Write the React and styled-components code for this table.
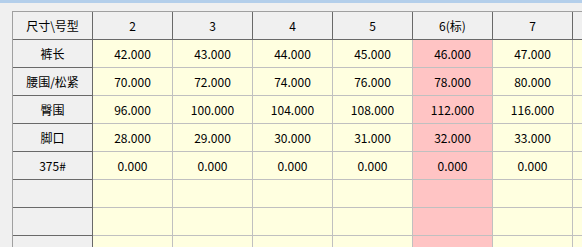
import React from "react";
import styled, { createGlobalStyle } from "styled-components";

const GlobalStyle = createGlobalStyle`
  html, body {
    margin: 0;
    padding: 0;
    background: #f0f0f0;
    overflow: hidden;
  }
  body {
    font-family: "Noto Sans CJK SC", "Noto Sans", sans-serif;
    font-size: 12px;
    color: #000;
  }
`;

const Window = styled.div`
  width: 582px;
  height: 247px;
  overflow: hidden;
  background: #f0f0f0;
  border-top: 3px solid #b4cfeb;
  box-sizing: border-box;
`;

const GridArea = styled.div`
  padding: 8px 0 0 12px;
`;

const Table = styled.table`
  border-collapse: separate;
  border-spacing: 0;
  border-top: 1px solid #a0a0a0;
  border-left: 1px solid #a0a0a0;
  table-layout: fixed;
`;

const HeadCell = styled.th`
  width: 79px;
  min-width: 79px;
  height: 27px;
  padding: 0;
  background: #f0f0f0;
  border-right: 1px solid #696969;
  border-bottom: 1px solid #696969;
  font-weight: normal;
  text-align: center;
  vertical-align: middle;
  line-height: 27px;
  white-space: nowrap;
`;

const Cell = styled.td`
  width: 79px;
  min-width: 79px;
  height: 27px;
  padding: 0;
  background: ${(p) => (p.$standard ? "#ffc4c4" : "#ffffe0")};
  border-right: 1px solid #c0c0c0;
  border-bottom: 1px solid #c0c0c0;
  text-align: center;
  vertical-align: middle;
  line-height: 27px;
  white-space: nowrap;
`;

const sizes = ["2", "3", "4", "5", "6(标)", "7", ""];
const standardIndex = 4;

const rows = [
  { name: "裤长", values: ["42.000", "43.000", "44.000", "45.000", "46.000", "47.000", ""] },
  { name: "腰围/松紧", values: ["70.000", "72.000", "74.000", "76.000", "78.000", "80.000", ""] },
  { name: "臀围", values: ["96.000", "100.000", "104.000", "108.000", "112.000", "116.000", ""] },
  { name: "脚口", values: ["28.000", "29.000", "30.000", "31.000", "32.000", "33.000", ""] },
  { name: "375#", values: ["0.000", "0.000", "0.000", "0.000", "0.000", "0.000", ""] },
  { name: "", values: Array(7).fill("") },
  { name: "", values: Array(7).fill("") },
  { name: "", values: Array(7).fill("") },
];

export default function App() {
  return (
    <>
      <GlobalStyle />
      <Window>
        <GridArea>
          <Table>
            <thead>
              <tr>
                <HeadCell>尺寸\号型</HeadCell>
                {sizes.map((s, i) => (
                  <HeadCell key={i}>{s}</HeadCell>
                ))}
              </tr>
            </thead>
            <tbody>
              {rows.map((row, r) => (
                <tr key={r}>
                  <HeadCell as="td">{row.name}</HeadCell>
                  {row.values.map((v, i) => (
                    <Cell key={i} $standard={i === standardIndex}>
                      {v}
                    </Cell>
                  ))}
                </tr>
              ))}
            </tbody>
          </Table>
        </GridArea>
      </Window>
    </>
  );
}
